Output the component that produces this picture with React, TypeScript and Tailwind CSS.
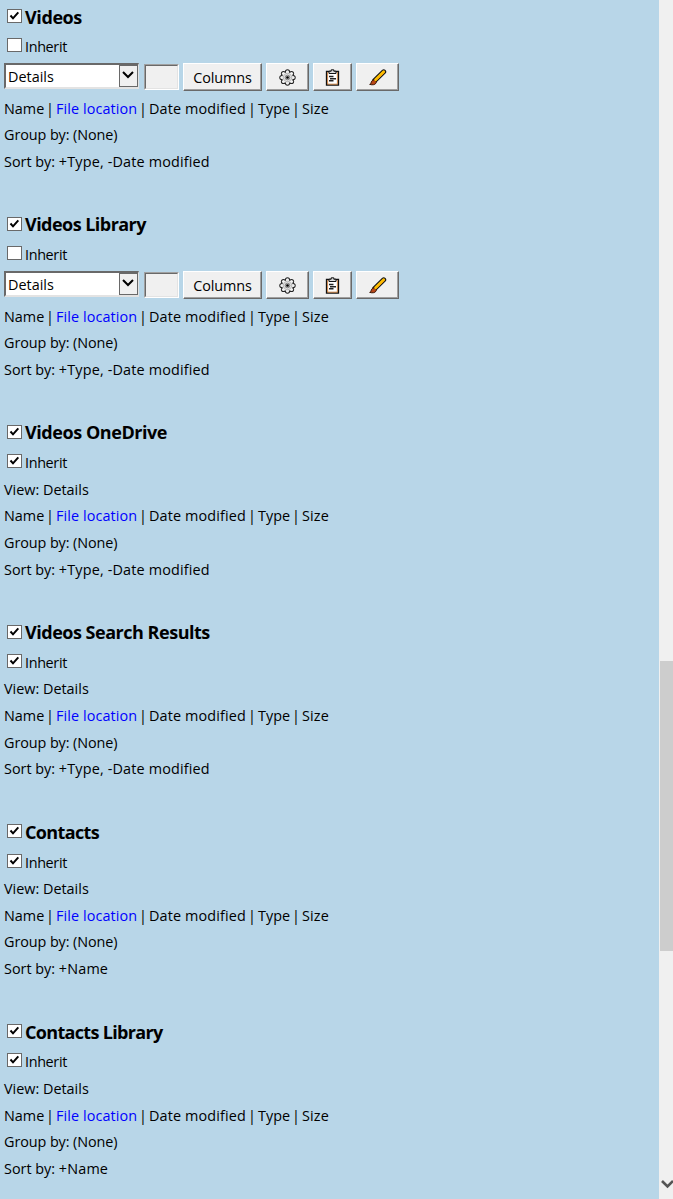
import React from "react";

type Folder = { name: string; inherit: boolean; sort: string; spacing: string };

const folders: Folder[] = [
  { name: "Videos", inherit: false, sort: "+Type, -Date modified", spacing: "tracking-[-0.4px]" },
  { name: "Videos Library", inherit: false, sort: "+Type, -Date modified", spacing: "tracking-[-0.54px]" },
  { name: "Videos OneDrive", inherit: true, sort: "+Type, -Date modified", spacing: "tracking-[-0.44px]" },
  { name: "Videos Search Results", inherit: true, sort: "+Type, -Date modified", spacing: "tracking-[-0.48px]" },
  { name: "Contacts", inherit: true, sort: "+Name", spacing: "tracking-[-0.63px]" },
  { name: "Contacts Library", inherit: true, sort: "+Name", spacing: "tracking-[-0.68px]" },
];

function CheckBox({ checked, className }: { checked: boolean; className: string }) {
  return (
    <span role="checkbox" aria-checked={checked} className={`mr-[3px] ml-[3px] block h-[14px] w-[15px] shrink-0 border border-[#696969] bg-white ${className}`}>
      {checked && (
        <svg viewBox="0 0 13 12" className="block h-[12px] w-[13px]" fill="none" stroke="black" strokeWidth="2">
          <path d="M2.5 5.5 5 8.3 10.3 2.3" />
        </svg>
      )}
    </span>
  );
}

const lobes = [
  [8.5, 2.9], [12.5, 4.5], [14.1, 8.5], [12.5, 12.5],
  [8.5, 14.1], [4.5, 12.5], [2.9, 8.5], [4.5, 4.5],
];

function Gear() {
  return (
    <svg viewBox="0 0 17 17" className="h-[17px] w-[17px]" fill="none">
      {lobes.map(([x, y]) => <circle key={`${x}-${y}-edge`} cx={x} cy={y} r="2.6" fill="#222" />)}
      {lobes.map(([x, y]) => <circle key={`${x}-${y}`} cx={x} cy={y} r="1.6" fill="#f4f4f4" />)}
      <circle cx="8.5" cy="8.5" r="5.3" fill="#f0f0f0" />
      <circle cx="8.5" cy="8.5" r="4.2" fill="#ddd" stroke="#b8b8b8" />
      <circle cx="8.5" cy="8.5" r="2.3" fill="#bbb" stroke="#888" />
      <circle cx="8.5" cy="8.5" r="1.3" fill="black" />
    </svg>
  );
}

function Clipboard() {
  return (
    <svg viewBox="0 0 15 17" className="h-[17px] w-[15px]" fill="none">
      <path d="M1.5 2.5h12v13.5h-12z" fill="#fff" stroke="#111" strokeWidth="1.3" />
      <path d="M2.6 3.2v12h9.8v-12" stroke="#c98245" />
      <path d="M4 4.5V2.2h2.2V.8h2.6v1.4H11v2.3z" fill="#ddd" stroke="#111" />
      <path d="M4 7.5h4.5M5 9.7h6M4 11.7h4.5" stroke="#222" strokeWidth="1.6" />
    </svg>
  );
}

function Brush() {
  return (
    <svg viewBox="0 0 18 17" className="h-[17px] w-[18px]" strokeLinecap="round">
      <path d="M5.5 11.8 14.7 2.8" stroke="#151515" strokeWidth="5" />
      <path d="M1.2 15.5c.9-.8.8-2.3 1.6-3.4.8-1.1 2.2-1.4 3.4-.6 1.2.8 1.4 1.8.7 2.8-1.1 1.5-3.4 1.9-5.7 1.2z" fill="#b94718" stroke="#3a1708" strokeWidth="1" />
      <path d="M6.6 10.7 14.7 2.8" stroke="#ffc000" strokeWidth="2.8" />
      <path d="M7.8 11 15.2 3.7" stroke="#f09a10" strokeWidth=".8" />
    </svg>
  );
}

const button = "flex h-[28px] shrink-0 items-center justify-center border border-t-white border-l-white border-r-[#696969] border-b-[#696969] bg-[#f0f0f0] shadow-[inset_-1px_-1px_0_#a0a0a0]";

function Controls() {
  return (
    <div className="flex h-[34.7px] items-start pt-[3px]">
      <div className="flex h-[26px] w-[135px] shrink-0 border-t-2 border-r border-b-2 border-l-2 border-t-[#696969] border-r-[#e3e3e3] border-b-[#e3e3e3] border-l-[#696969] bg-white">
        <span className="flex w-[113px] items-center pt-[3px] pl-[2px]">Details</span>
        <span className="flex h-[22px] w-[19px] items-center justify-center border border-[#696969] bg-[#f0f0f0]">
          <svg viewBox="0 0 12 8" className="mr-px mb-[2px] h-[8px] w-[12px]" fill="none" stroke="black" strokeWidth="2">
            <path d="m1 1 5 5 5-5" />
          </svg>
        </span>
      </div>
      <div className="mt-px ml-[5px] h-[26px] w-[35px] shrink-0 border border-t-[#a0a0a0] border-r-white border-b-white border-l-[#a0a0a0]">
        <div className="h-full w-full border border-t-[#696969] border-r-[#e3e3e3] border-b-[#e3e3e3] border-l-[#696969] bg-[#f0f0f0]" />
      </div>
      <div className={`${button} ml-[4px] w-[79px]`}><span className="pt-[2px] tracking-[-0.1px]">Columns</span></div>
      <div className={`${button} ml-[4px] w-[43px]`}><span className="pt-px pr-px"><Gear /></span></div>
      <div className={`${button} ml-[4px] w-[39px]`}><span className="pt-px"><Clipboard /></span></div>
      <div className={`${button} ml-[4px] w-[43px]`}><span className="pt-px"><Brush /></span></div>
    </div>
  );
}

const row = "flex h-[26.667px] items-center pt-[1.5px]";

function Section({ folder }: { folder: Folder }) {
  return (
    <section className="pb-[33.2px]">
      <div className="flex h-[33.3px] items-center">
        <CheckBox checked className="mb-[1px]" />
        <h2 className={`text-[18px] font-bold ${folder.spacing}`}>{folder.name}</h2>
      </div>
      <div className="flex h-[26.667px] items-center">
        <CheckBox checked={folder.inherit} className="mb-[2.4px]" />
        <span className="pt-[1.5px] tracking-[-0.35px]">Inherit</span>
      </div>
      {folder.inherit ? <div className={row}>View: Details</div> : <Controls />}
      <div className={row}>
        <span className="w-[42px]">Name</span>
        <span className="w-[10px]">|</span>
        <span className="w-[83px] tracking-[0.09px] text-[#0000ff]">File location</span>
        <span className="w-[10px]">|</span>
        <span className="w-[99px] tracking-[0.13px]">Date modified</span>
        <span className="w-[10px]">|</span>
        <span className="w-[34px]">Type</span>
        <span className="w-[10px]">|</span>
        <span className="tracking-[0.15px]">Size</span>
      </div>
      <div className={`${row} tracking-[-0.08px]`}>Group by: (None)</div>
      <div className={row}>
        <span className="whitespace-pre">Sort by: </span>
        <span className="tracking-[0.16px]">{folder.sort}</span>
      </div>
    </section>
  );
}

export default function App() {
  return (
    <div className="flex h-[1199px] w-[673px] overflow-hidden bg-[#b8d6e8] font-['Open_Sans','Noto_Sans',sans-serif] text-[14.4px] leading-[20px] whitespace-nowrap text-black">
      <main className="min-w-0 flex-1 overflow-hidden pl-[4px]">
        {folders.map((f) => <Section key={f.name} folder={f} />)}
      </main>
      <aside className="flex h-full w-[14px] shrink-0 flex-col justify-between bg-[#f0f0f0] pt-[661px] pb-[10px] pl-px">
        <div className="h-[290px] bg-[#cdcdcd]" />
        <svg viewBox="0 0 13 10" className="h-[10px] w-[13px]" fill="none" stroke="#555" strokeWidth="2.6">
          <path d="m2 2 5.5 5.5L13 2" />
        </svg>
      </aside>
    </div>
  );
}
